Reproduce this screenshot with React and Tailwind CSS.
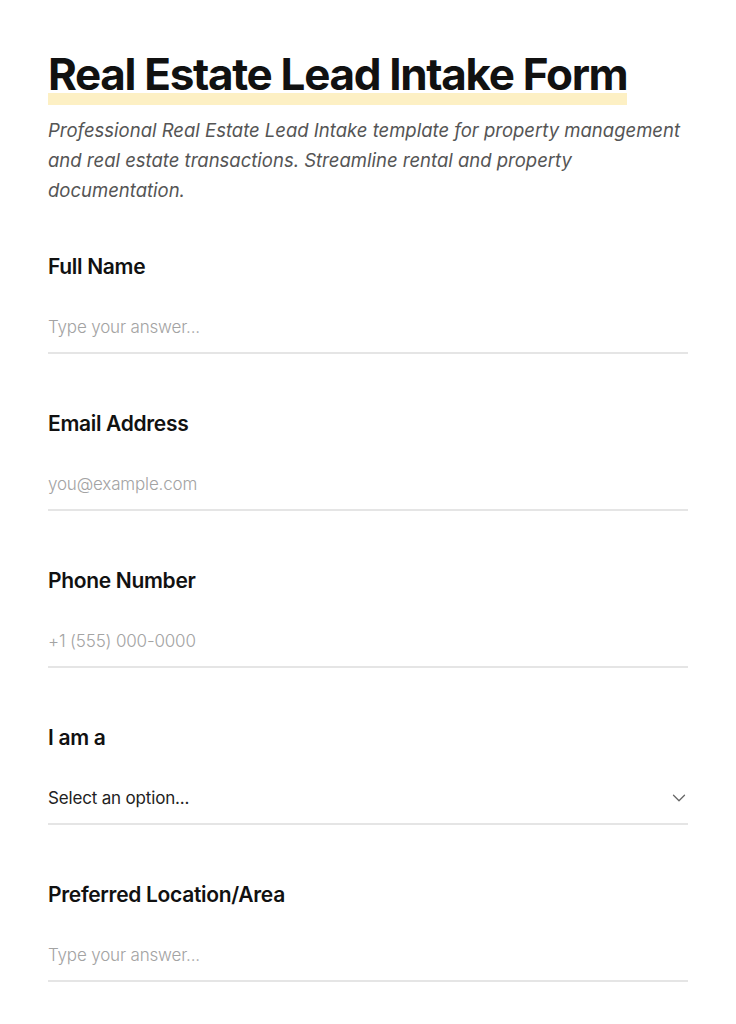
import React from "react";
import { ChevronDown } from "lucide-react";

const fields = [
  { label: "Full Name", placeholder: "Type your answer..." },
  { label: "Email Address", placeholder: "you@example.com" },
  { label: "Phone Number", placeholder: "+1 (555) 000-0000" },
  { label: "I am a", select: true },
  { label: "Preferred Location/Area", placeholder: "Type your answer..." },
];

const Field = ({ label, placeholder, select }) => (
  <div className="mb-14">
    <label className="block text-[21px] leading-[28px] font-semibold text-[#111] tracking-[-0.015em] mb-5">
      {label}
    </label>
    {select ? (
      <div className="flex items-center justify-between pt-[14px] pb-[13px] border-b-2 border-[#e5e5e5]">
        <span className="text-[17px] leading-[24px] text-[#222] tracking-[-0.01em]">
          Select an option...
        </span>
        <ChevronDown size={22} strokeWidth={1.4} className="text-[#666] -mr-[2px]" />
      </div>
    ) : (
      <input
        type="text"
        placeholder={placeholder}
        className="block w-full pt-[14px] pb-[13px] text-[17px] leading-[24px] font-light tracking-[-0.01em] border-b-2 border-[#e5e5e5] outline-none placeholder:text-[#a3a3a3]"
      />
    )}
  </div>
);

export default function App() {
  return (
    <div className="min-h-screen bg-white font-['Inter',sans-serif] text-[#111]">
      <div className="px-12 pt-[52px] pb-10">
        <h1 className="text-[44px] leading-none font-bold tracking-[-0.03em]">
          <span className="inline-block pb-[9px] bg-[linear-gradient(to_top,#fdf0c4_12px,transparent_12px)]">
            Real Estate Lead Intake Form
          </span>
        </h1>
        <p className="mt-[10px] text-[18.5px] leading-[30px] italic text-[#555]">
          Professional Real Estate Lead Intake template for property management
          and real estate transactions. Streamline rental and property
          documentation.
        </p>
        <div className="mt-12">
          {fields.map((f) => (
            <Field key={f.label} {...f} />
          ))}
        </div>
      </div>
    </div>
  );
}
